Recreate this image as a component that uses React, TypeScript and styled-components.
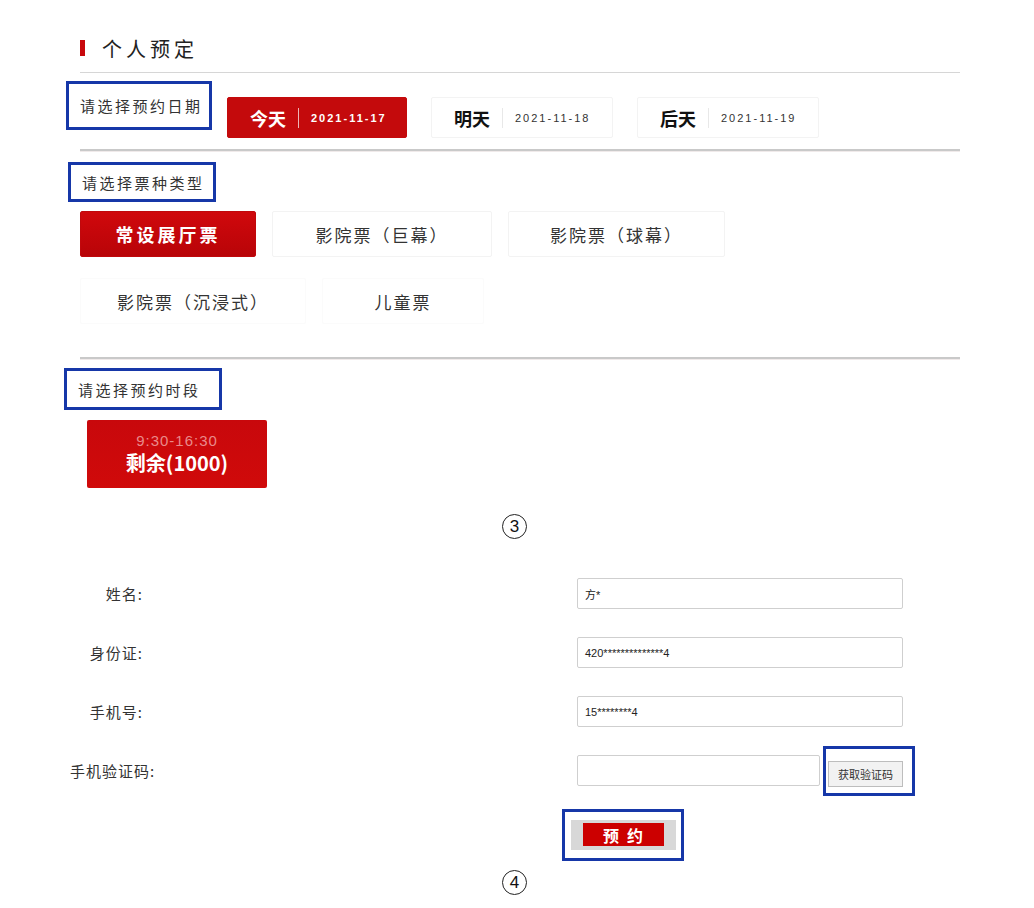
import styled, { createGlobalStyle } from 'styled-components'

const GlobalStyle = createGlobalStyle`
  body {
    margin: 0;
    background: #fff;
    font-family: "Noto Sans CJK SC", "Noto Sans", sans-serif;
    color: #222;
  }
`

const Page = styled.div`
  width: 880px;
  padding: 36px 0 0 80px;
`

const Header = styled.div`
  display: flex;
  align-items: center;
  gap: 17px;
  height: 24px;
  padding-bottom: 12px;
  border-bottom: 1px solid #d6d6d6;
  font-size: 20px;
  letter-spacing: 4px;
  color: #222;
  &::before {
    content: '';
    width: 5px;
    height: 16px;
    background: #c8080c;
  }
`

const Marked = styled.div`
  display: inline-flex;
  align-items: center;
  box-sizing: border-box;
  border: 3px solid #1637a8;
`

const StepLabel = styled(Marked)<{ $w: number; $h: number; $shift: number }>`
  width: ${(p) => p.$w}px;
  height: ${(p) => p.$h}px;
  margin-left: ${(p) => p.$shift}px;
  padding-left: 11px;
  font-size: 15px;
  letter-spacing: 2.5px;
  color: #333;
  flex: 0 0 auto;
`

const DateRow = styled.div`
  display: flex;
  align-items: flex-start;
  margin-top: 8px;
`

const DateList = styled.div`
  display: flex;
  gap: 24px;
  margin: 16px 0 0 15px;
`

const DateButton = styled.div<{ $active?: boolean }>`
  display: flex;
  align-items: center;
  gap: 12px;
  box-sizing: border-box;
  width: ${(p) => (p.$active ? 180 : 182)}px;
  height: 41px;
  padding-left: 22px;
  border-radius: 2px;
  background: ${(p) => (p.$active ? '#c40a0c' : '#fff')};
  border: 1px solid ${(p) => (p.$active ? '#c40a0c' : '#f3f3f3')};
  color: ${(p) => (p.$active ? '#fff' : '#111')};
  b {
    font-size: 18px;
    font-weight: 700;
  }
  span {
    font-family: "Liberation Sans", Arial, sans-serif;
    font-size: 11px;
    letter-spacing: 2px;
    font-weight: ${(p) => (p.$active ? 700 : 400)};
    color: ${(p) => (p.$active ? '#fff' : '#333')};
  }
  i {
    width: 1px;
    height: 20px;
    background: ${(p) => (p.$active ? 'rgba(255,255,255,0.7)' : '#e8e8e8')};
  }
`

const Divider = styled.div<{ $top: number }>`
  margin-top: ${(p) => p.$top}px;
  height: 2px;
  background: #c9c9c9;
  border-bottom: 1px solid #f0eaea;
`

const Section = styled.div<{ $top: number }>`
  margin-top: ${(p) => p.$top}px;
`

const TicketGrid = styled.div`
  display: flex;
  flex-wrap: wrap;
  column-gap: 16px;
  row-gap: 21px;
  margin-top: 9px;
`

const TicketButton = styled.div<{ $active?: boolean; $w: number; $faint?: boolean }>`
  display: flex;
  align-items: center;
  justify-content: center;
  box-sizing: border-box;
  width: ${(p) => p.$w}px;
  height: 46px;
  border-radius: 2px;
  font-size: ${(p) => (p.$active ? 18 : 17)}px;
  letter-spacing: ${(p) => (p.$active ? 3 : 2)}px;
  background: ${(p) => (p.$active ? 'linear-gradient(#d0080c, #b80408)' : '#fff')};
  border: 1px solid ${(p) => (p.$active ? '#c0080c' : p.$faint ? '#fbfbfb' : '#f3f3f3')};
  color: ${(p) => (p.$active ? '#fff' : '#333')};
  font-weight: ${(p) => (p.$active ? 700 : 400)};
`

const SlotButton = styled.div`
  display: flex;
  flex-direction: column;
  align-items: center;
  justify-content: center;
  width: 180px;
  height: 68px;
  margin: 10px 0 0 7px;
  border-radius: 2px;
  background: linear-gradient(#c8080c, #d00a0a);
  color: #fff;
  small {
    font-family: "Liberation Sans", Arial, sans-serif;
    font-size: 15px;
    letter-spacing: 1px;
    color: #e98a8a;
    line-height: 18px;
  }
  strong {
    font-size: 20px;
    line-height: 26px;
  }
`

const StepMark = styled.div<{ $top: number }>`
  display: flex;
  align-items: center;
  justify-content: center;
  box-sizing: border-box;
  width: 25px;
  height: 25px;
  margin: ${(p) => p.$top}px 0 0 422px;
  border: 1.5px solid #222;
  border-radius: 50%;
  font-family: "Liberation Sans", Arial, sans-serif;
  font-size: 17px;
  color: #111;
`

const Form = styled.div`
  display: flex;
  flex-direction: column;
  gap: 28px;
  margin: 39px 0 0 -10px;
`

const FormRow = styled.div`
  display: flex;
  align-items: center;
  height: 31px;
`

const Label = styled.div`
  width: 73px;
  margin-right: 434px;
  text-align: right;
  white-space: nowrap;
  font-size: 15px;
  letter-spacing: 1px;
  color: #333;
`

const Input = styled.div<{ $w: number }>`
  display: flex;
  align-items: center;
  box-sizing: border-box;
  width: ${(p) => p.$w}px;
  height: 31px;
  padding-left: 7px;
  border: 1px solid #cfcfcf;
  border-radius: 2px;
  font-family: "Liberation Sans", "Noto Sans CJK SC", sans-serif;
  font-size: 11px;
  color: #222;
`

const CodeMark = styled(Marked)`
  margin-left: 3px;
  padding: 12px 9px 6px 2px;
`

const CodeButton = styled.div`
  display: flex;
  align-items: center;
  justify-content: center;
  width: 75px;
  height: 26px;
  box-sizing: border-box;
  border: 1px solid #bdbdbd;
  background: #f2f2f2;
  font-size: 11px;
  color: #333;
`

const SubmitMark = styled(Marked)`
  width: 122px;
  height: 52px;
  margin: 23px 0 0 482px;
  justify-content: center;
`

const SubmitButton = styled.div`
  display: flex;
  justify-content: center;
  width: 105px;
  height: 30px;
  padding-top: 3px;
  box-sizing: border-box;
  background: #d8d8d8;
  span {
    display: flex;
    align-items: center;
    justify-content: center;
    width: 81px;
    height: 23px;
    background: #cc0000;
    color: #fff;
    font-size: 16px;
    font-weight: 700;
    letter-spacing: 8px;
    text-indent: 8px;
  }
`

const tickets = [
  { name: '常设展厅票', w: 176, active: true },
  { name: '影院票（巨幕）', w: 220 },
  { name: '影院票（球幕）', w: 217 },
  { name: '影院票（沉浸式）', w: 226, faint: true },
  { name: '儿童票', w: 162, faint: true },
]

const fields = [
  { label: '姓名:', value: '方*' },
  { label: '身份证:', value: '420**************4' },
  { label: '手机号:', value: '15********4' },
]

const App = () => {
  return (
    <Page>
      <GlobalStyle />
      <Header>个人预定</Header>

      <DateRow>
        <StepLabel $w={146} $h={49} $shift={-14}>请选择预约日期</StepLabel>
        <DateList>
          <DateButton $active>
            <b>今天</b>
            <i />
            <span>2021-11-17</span>
          </DateButton>
          <DateButton>
            <b>明天</b>
            <i />
            <span>2021-11-18</span>
          </DateButton>
          <DateButton>
            <b>后天</b>
            <i />
            <span>2021-11-19</span>
          </DateButton>
        </DateList>
      </DateRow>

      <Divider $top={11} />

      <Section $top={10}>
        <StepLabel $w={148} $h={40} $shift={-12}>请选择票种类型</StepLabel>
        <TicketGrid>
          {tickets.map((t) => (
            <TicketButton key={t.name} $w={t.w} $active={t.active} $faint={t.faint}>
              {t.name}
            </TicketButton>
          ))}
        </TicketGrid>
      </Section>

      <Divider $top={33} />

      <Section $top={8}>
        <StepLabel $w={158} $h={42} $shift={-16}>请选择预约时段</StepLabel>
        <SlotButton>
          <small>9:30-16:30</small>
          <strong>剩余(1000)</strong>
        </SlotButton>
      </Section>

      <StepMark $top={26}>3</StepMark>

      <Form>
        {fields.map((f) => (
          <FormRow key={f.label}>
            <Label>{f.label}</Label>
            <Input $w={326}>{f.value}</Input>
          </FormRow>
        ))}
        <FormRow>
          <Label>手机验证码:</Label>
          <Input $w={243} />
          <CodeMark>
            <CodeButton>获取验证码</CodeButton>
          </CodeMark>
        </FormRow>
      </Form>

      <SubmitMark>
        <SubmitButton>
          <span>预约</span>
        </SubmitButton>
      </SubmitMark>

      <StepMark $top={9}>4</StepMark>
    </Page>
  )
}

export default App
